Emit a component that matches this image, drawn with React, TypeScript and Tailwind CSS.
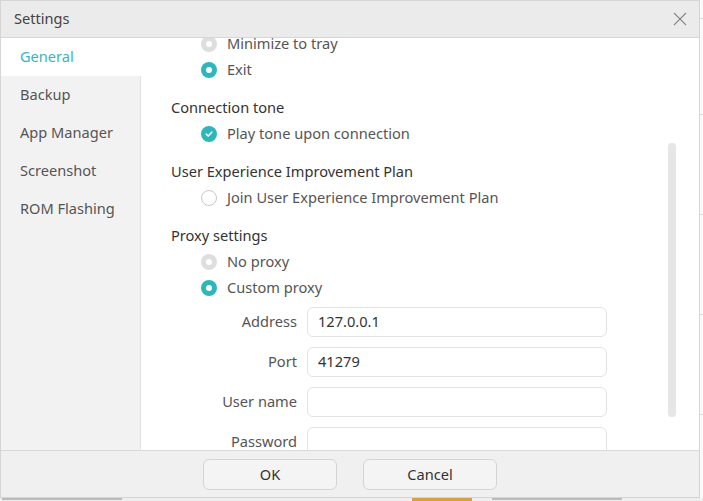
import React from "react";

const font = { fontFamily: '"Noto Sans", "Open Sans", Arial, sans-serif' };

function Radio({ state }: { state: "on" | "off" | "disabled" }) {
  if (state === "on")
    return (
      <span className="w-4 h-4 rounded-full bg-[#2fb6bd] flex items-center justify-center shrink-0">
        <span className="w-[6px] h-[6px] rounded-full bg-white" />
      </span>
    );
  if (state === "disabled")
    return (
      <span className="w-4 h-4 rounded-full bg-[#dedede] flex items-center justify-center shrink-0">
        <span className="w-[6px] h-[6px] rounded-full bg-white" />
      </span>
    );
  return <span className="w-4 h-4 rounded-full border border-[#c9c9c9] bg-white shrink-0" />;
}

function Check() {
  return (
    <span className="w-4 h-4 rounded-full bg-[#2fb6bd] flex items-center justify-center shrink-0">
      <svg width="10" height="10" viewBox="0 0 10 10">
        <path d="M2.2 5.2 L4.2 7 L7.8 3.2" fill="none" stroke="white" strokeWidth="1.6" strokeLinecap="round" strokeLinejoin="round" />
      </svg>
    </span>
  );
}

function Row({ icon, label }: { icon: React.ReactNode; label: string }) {
  return (
    <div className="h-[26px] flex items-center pl-[30px] gap-[10px] text-[14.6px] text-[#555]">
      {icon}
      <span>{label}</span>
    </div>
  );
}

function Heading({ text }: { text: string }) {
  return <div className="h-[26px] flex items-center text-[14.6px] text-[#333]">{text}</div>;
}

function Field({ label, value }: { label: string; value?: string }) {
  return (
    <div className="flex items-center h-[30px]">
      <div className="w-[136px] text-right pr-[10px] text-[14.6px] text-[#555]">{label}</div>
      <div className="w-[300px] h-[30px] rounded-[6px] border border-[#e3e3e3] bg-white flex items-center px-[10px] text-[14.6px] text-[#333]">
        {value}
      </div>
    </div>
  );
}

const sideItems = ["General", "Backup", "App Manager", "Screenshot", "ROM Flashing"];

export default function App() {
  return (
    <div className="w-[703px] h-[501px] overflow-hidden bg-[#f7f7f7] flex flex-col" style={font}>
      <div className="flex h-[498px] shrink-0">
        {/* dialog */}
        <div className="w-[700px] h-[498px] flex flex-col border border-[#d5d5d5] bg-white">
          {/* title bar */}
          <div className="h-[37px] shrink-0 bg-[#ebebeb] border-b border-[#d6d6d6] flex items-center justify-between pl-[13px] pr-[12px]">
            <span className="text-[14.6px] text-[#444] -mt-[1px]">Settings</span>
            <svg width="14" height="14" viewBox="0 0 14 14">
              <path d="M1 1 L13 13 M13 1 L1 13" stroke="#888" strokeWidth="1.1" />
            </svg>
          </div>
          {/* body */}
          <div className="flex flex-1 min-h-0">
            <div className="w-[140px] shrink-0 flex flex-col bg-[#f2f2f2] border-r border-[#e2e2e2]">
              {sideItems.map((s, i) =>
                i === 0 ? (
                  <div key={s} className="h-[38px] bg-white -mr-px flex items-center pl-[19px] text-[14.6px] text-[#3ab4bc]">
                    {s}
                  </div>
                ) : (
                  <div key={s} className="h-[38px] flex items-center pl-[19px] text-[14.6px] text-[#555]">
                    {s}
                  </div>
                )
              )}
            </div>
            <div className="flex-1 relative overflow-hidden">
              <div className="flex flex-col pl-[30px] -mt-[7px]">
                <Row icon={<Radio state="disabled" />} label="Minimize to tray" />
                <Row icon={<Radio state="on" />} label="Exit" />
                <div className="mt-[12px]">
                  <Heading text="Connection tone" />
                  <Row icon={<Check />} label="Play tone upon connection" />
                </div>
                <div className="mt-[12px]">
                  <Heading text="User Experience Improvement Plan" />
                  <Row icon={<Radio state="off" />} label="Join User Experience Improvement Plan" />
                </div>
                <div className="mt-[12px]">
                  <Heading text="Proxy settings" />
                  <Row icon={<Radio state="disabled" />} label="No proxy" />
                  <Row icon={<Radio state="on" />} label="Custom proxy" />
                  <div className="flex flex-col gap-[10px] mt-[6px]">
                    <Field label="Address" value="127.0.0.1" />
                    <Field label="Port" value="41279" />
                    <Field label="User name" />
                    <Field label="Password" />
                  </div>
                </div>
              </div>
              <div className="absolute left-[527px] top-[105px] w-[8px] h-[274px] rounded-full bg-[#e6e6e6]" />
            </div>
          </div>
          {/* footer */}
          <div className="h-[47px] shrink-0 bg-[#f0f0f0] border-t border-[#d9d9d9] flex items-center justify-center gap-[26px]">
            <button className="w-[134px] h-[31px] rounded-[6px] border border-[#d4d4d4] bg-[#f4f4f4] text-[14.6px] text-[#333] pt-[1px]">OK</button>
            <button className="w-[134px] h-[31px] rounded-[6px] border border-[#d4d4d4] bg-[#f4f4f4] text-[14.6px] text-[#333] pt-[1px]">Cancel</button>
          </div>
        </div>
        {/* background strip right */}
        <div className="w-[3px] flex flex-col bg-[#fafafa]">
          <div className="h-[18px]" />
          <div className="h-px bg-[#dcdcdc]" />
          <div className="h-[95px]" />
          <div className="h-px bg-[#dcdcdc]" />
          <div className="h-[99px]" />
          <div className="h-px bg-[#dcdcdc]" />
          <div className="h-[99px]" />
          <div className="h-px bg-[#dcdcdc]" />
          <div className="h-[99px]" />
          <div className="h-px bg-[#dcdcdc]" />
        </div>
      </div>
      {/* background strip bottom */}
      <div className="h-[3px] bg-[#eeeeee] flex items-start">
        <div className="w-[120px] h-[2px] ml-[2px] bg-[#9a9a9a] opacity-60" />
        <div className="w-[290px]" />
        <div className="w-[60px] h-[3px] bg-[#d8a040]" />
        <div className="w-[20px]" />
        <div className="w-[130px] h-[2px] bg-[#9a9a9a] opacity-60" />
      </div>
    </div>
  );
}
